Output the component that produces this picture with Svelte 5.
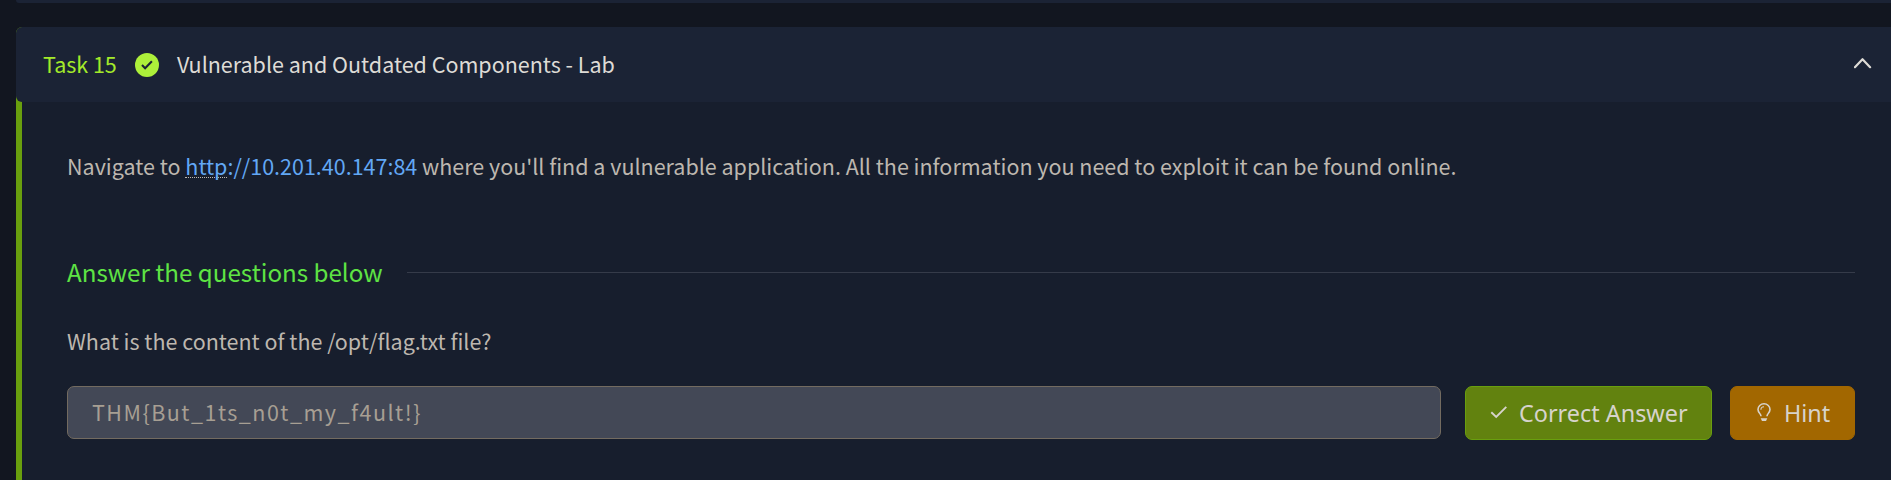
<script>
  const task = {
    label: 'Task 15',
    title: 'Vulnerable and Outdated Components - Lab',
    question: 'What is the content of the /opt/flag.txt file?'
  };
  let answer = $state('THM{But_1ts_n0t_my_f4ult!}');
  let open = $state(true);
</script>

<main>
  <div class="previous"></div>
  <section class="task">
    <header>
      <span class="label">{task.label}</span>
      <svg class="done" width="24" height="24" viewBox="0 0 24 24">
        <circle cx="12" cy="12" r="12" fill="#adf03a" />
        <path d="M7 12.1l3.1 3.1 6.8-6.9" fill="none" stroke="#1b2335" stroke-width="2.1" />
      </svg>
      <h2>{task.title}</h2>
      <button class="toggle" aria-label="Toggle task" onclick={() => (open = !open)}>
        <svg width="18" height="12" viewBox="0 0 18 12">
          <path d="M.9 10.2L8.5 2.2l7.6 8" fill="none" stroke="#dedbd6" stroke-width="2.2" stroke-linecap="round" stroke-linejoin="round" />
        </svg>
      </button>
    </header>
    {#if open}
      <div class="body">
        <p class="intro">Navigate to <span class="link"><span class="scheme">http</span>://10.201.40.147:84</span> where you'll find a vulnerable application. All the information you need to exploit it can be found online.</p>
        <div class="heading">
          <h3>Answer the questions below</h3>
          <div class="rule"></div>
        </div>
        <p class="question">{task.question}</p>
        <div class="row">
          <input bind:value={answer} disabled aria-label="Answer" />
          <button class="btn correct">
            <svg width="18" height="14" viewBox="0 0 18 14">
              <path d="M1.3 7.2l4.9 4.7L16.3 1.8" fill="none" stroke="currentColor" stroke-width="1.9" />
            </svg>
            <span>Correct Answer</span>
          </button>
          <button class="btn hint">
            <svg width="14" height="19" viewBox="0 0 14 19" fill="none" stroke="currentColor" stroke-width="1.6">
              <path d="M4 13.2C4 10.9 1 9.6 1 6.5A6 5.7 0 0 1 13 6.5C13 9.6 10 10.9 10 13.2" />
              <path d="M3.9 6.7A3.1 3 0 0 1 7 3.7" stroke-width="1.1" />
              <path d="M3.7 15.2h6.6l-1.3 2.9H5z" fill="currentColor" stroke="none" />
            </svg>
            <span>Hint</span>
          </button>
        </div>
      </div>
    {/if}
  </section>
</main>

<style>
  :global(body) {
    margin: 0;
    background: #121620;
    overflow: hidden;
  }
  main {
    box-sizing: border-box;
    height: 480px;
    overflow: hidden;
    padding-left: 16px;
    background: #121620;
    font-family: "Noto Sans CJK SC", "Noto Sans", sans-serif;
    font-size: 21.49px;
    line-height: 36px;
    color: #bdb7af;
  }
  h2, h3, p {
    margin: 0;
    font-weight: 400;
    white-space: nowrap;
  }
  .previous {
    height: 3px;
    margin-bottom: 24px;
    background: #1b2335;
    border-radius: 0 0 0 5px;
  }
  .task {
    height: 453px;
    background: linear-gradient(to right, #699f0e 6px, #171e2d 6px);
    border-radius: 6px 0 0 0;
  }
  header {
    box-sizing: border-box;
    height: 75px;
    display: flex;
    align-items: center;
    padding: 0 19px 0 27px;
    background: #1b2335;
    border-radius: 6px 0 0 6px;
  }
  .label {
    width: 92px;
    padding-bottom: 2px;
    color: #a3ea2a;
    white-space: nowrap;
  }
  h2 {
    margin-left: 18px;
    padding-bottom: 2px;
    font-size: 21.49px;
    color: #dedbd6;
  }
  .toggle {
    display: flex;
    margin-left: auto;
    padding: 0 0 3px;
    border: 0;
    background: none;
  }
  .body {
    padding: 46px 36px 0 51px;
  }
  .heading {
    display: flex;
    align-items: center;
    gap: 24px;
    margin-top: 70px;
  }
  h3 {
    font-size: 24.18px;
    color: #5ee344;
  }
  .rule {
    flex: 1;
    height: 1px;
    background: #353b49;
  }
  .link {
    color: #62a8f5;
  }
  .scheme {
    border-bottom: 1px dotted #bdb7af;
    display: inline-block;
    line-height: 23px;
  }
  .question {
    margin-top: 33px;
  }
  .row {
    display: flex;
    align-items: flex-start;
    margin-top: 27px;
  }
  input {
    box-sizing: border-box;
    flex: 1;
    min-width: 0;
    height: 53px;
    padding: 0 24px 2px;
    border: 1px solid #736b60;
    border-radius: 7px;
    background: #434856;
    color: #a79f93;
    font: inherit;
    letter-spacing: 1.5px;
  }
  .btn {
    box-sizing: border-box;
    display: flex;
    align-items: center;
    height: 54px;
    padding: 0 0 0 25px;
    border: 1px solid #699f0e;
    border-radius: 7px;
    color: #d7d3cb;
    font: 400 23.4px/36px "Noto Sans", sans-serif;
    white-space: nowrap;
  }
  .correct {
    width: 247px;
    margin-left: 24px;
    gap: 10px;
    background: #62820f;
  }
  .correct svg {
    margin-left: -1px;
    margin-right: 1px;
    margin-bottom: 2px;
  }
  .hint {
    width: 125px;
    margin-left: 18px;
    padding-left: 26px;
    gap: 13px;
    background: #a26700;
    border-color: #a26700;
  }
  .hint svg {
    margin-bottom: 1px;
  }
</style>
